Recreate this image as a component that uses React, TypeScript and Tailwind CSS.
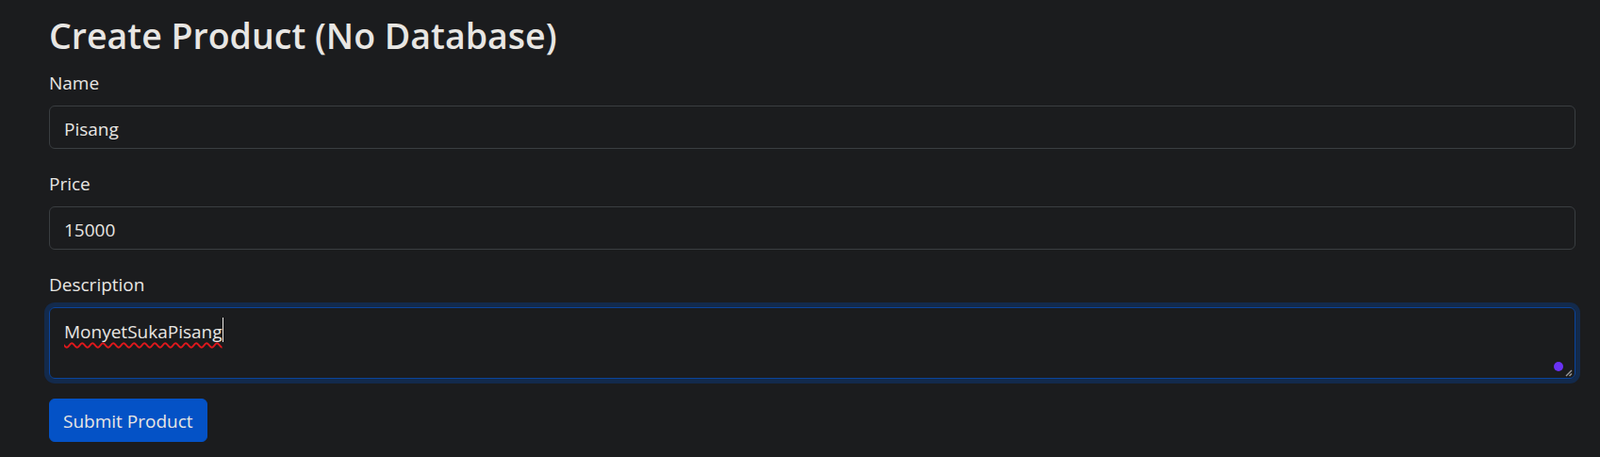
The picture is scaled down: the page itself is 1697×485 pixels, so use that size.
import React from 'react';

export default function App() {
  return (
    <div className="min-h-screen bg-[#1b1c1e] text-[#e8e6e3] font-['Open_Sans',sans-serif]">
      <div className="pl-[52px] pr-[26px]">
        <h2 className="pt-[16px] mb-[14px] text-[37.5px] leading-[44px] font-semibold">Create Product (No Database)</h2>

        <form onSubmit={e => e.preventDefault()}>
          <div className="mb-[23px]">
            <label className="block text-[19px] leading-[28px] mb-[10px]">Name</label>
            <input
              type="text"
              defaultValue="Pisang"
              className="block w-full h-[46px] px-[15px] pt-[3px] text-[19px] leading-[28px] bg-[#1b1c1e] text-[#e8e6e3] border border-[#3a3e41] rounded-[6px] outline-none"
            />
          </div>

          <div className="mb-[23px]">
            <label className="block text-[19px] leading-[28px] mb-[10px]">Price</label>
            <input
              type="text"
              defaultValue="15000"
              className="block w-full h-[46px] px-[15px] pt-[3px] text-[19px] leading-[28px] bg-[#1b1c1e] text-[#e8e6e3] border border-[#3a3e41] rounded-[6px] outline-none"
            />
          </div>

          <div className="mb-[21px]">
            <label className="block text-[19px] leading-[28px] mb-[10px]">Description</label>
            <div className="relative h-[76px] px-[15px] pt-[10px] text-[19px] leading-[28px] border border-[#0a449c] rounded-[6px] shadow-[0_0_0_5px_#132a4c]">
              <span className="underline decoration-wavy decoration-[#e0181c] decoration-[1.5px] underline-offset-[4px] [text-decoration-skip-ink:none]">MonyetSukaPisang</span>
              <span className="inline-block w-px h-[26px] bg-[#e8e6e3] align-[-4px]" />
              <span className="absolute right-[12px] bottom-[7px] w-[10px] h-[10px] rounded-full bg-[#6a32f5]" />
              <svg className="absolute right-[2px] bottom-[1px]" width="8" height="8" viewBox="0 0 8 8">
                <path d="M7 1 L1 7 M7 4.5 L4.5 7" stroke="#9a9a9a" strokeWidth="1.4" fill="none" />
              </svg>
            </div>
          </div>

          <button
            type="submit"
            className="h-[46px] px-[14px] pt-[2px] text-[19px] leading-[28px] text-[#e8e6e3] bg-[#0452c6] border border-[#0452c6] rounded-[6px]"
          >
            Submit Product
          </button>
        </form>
      </div>
    </div>
  );
}
